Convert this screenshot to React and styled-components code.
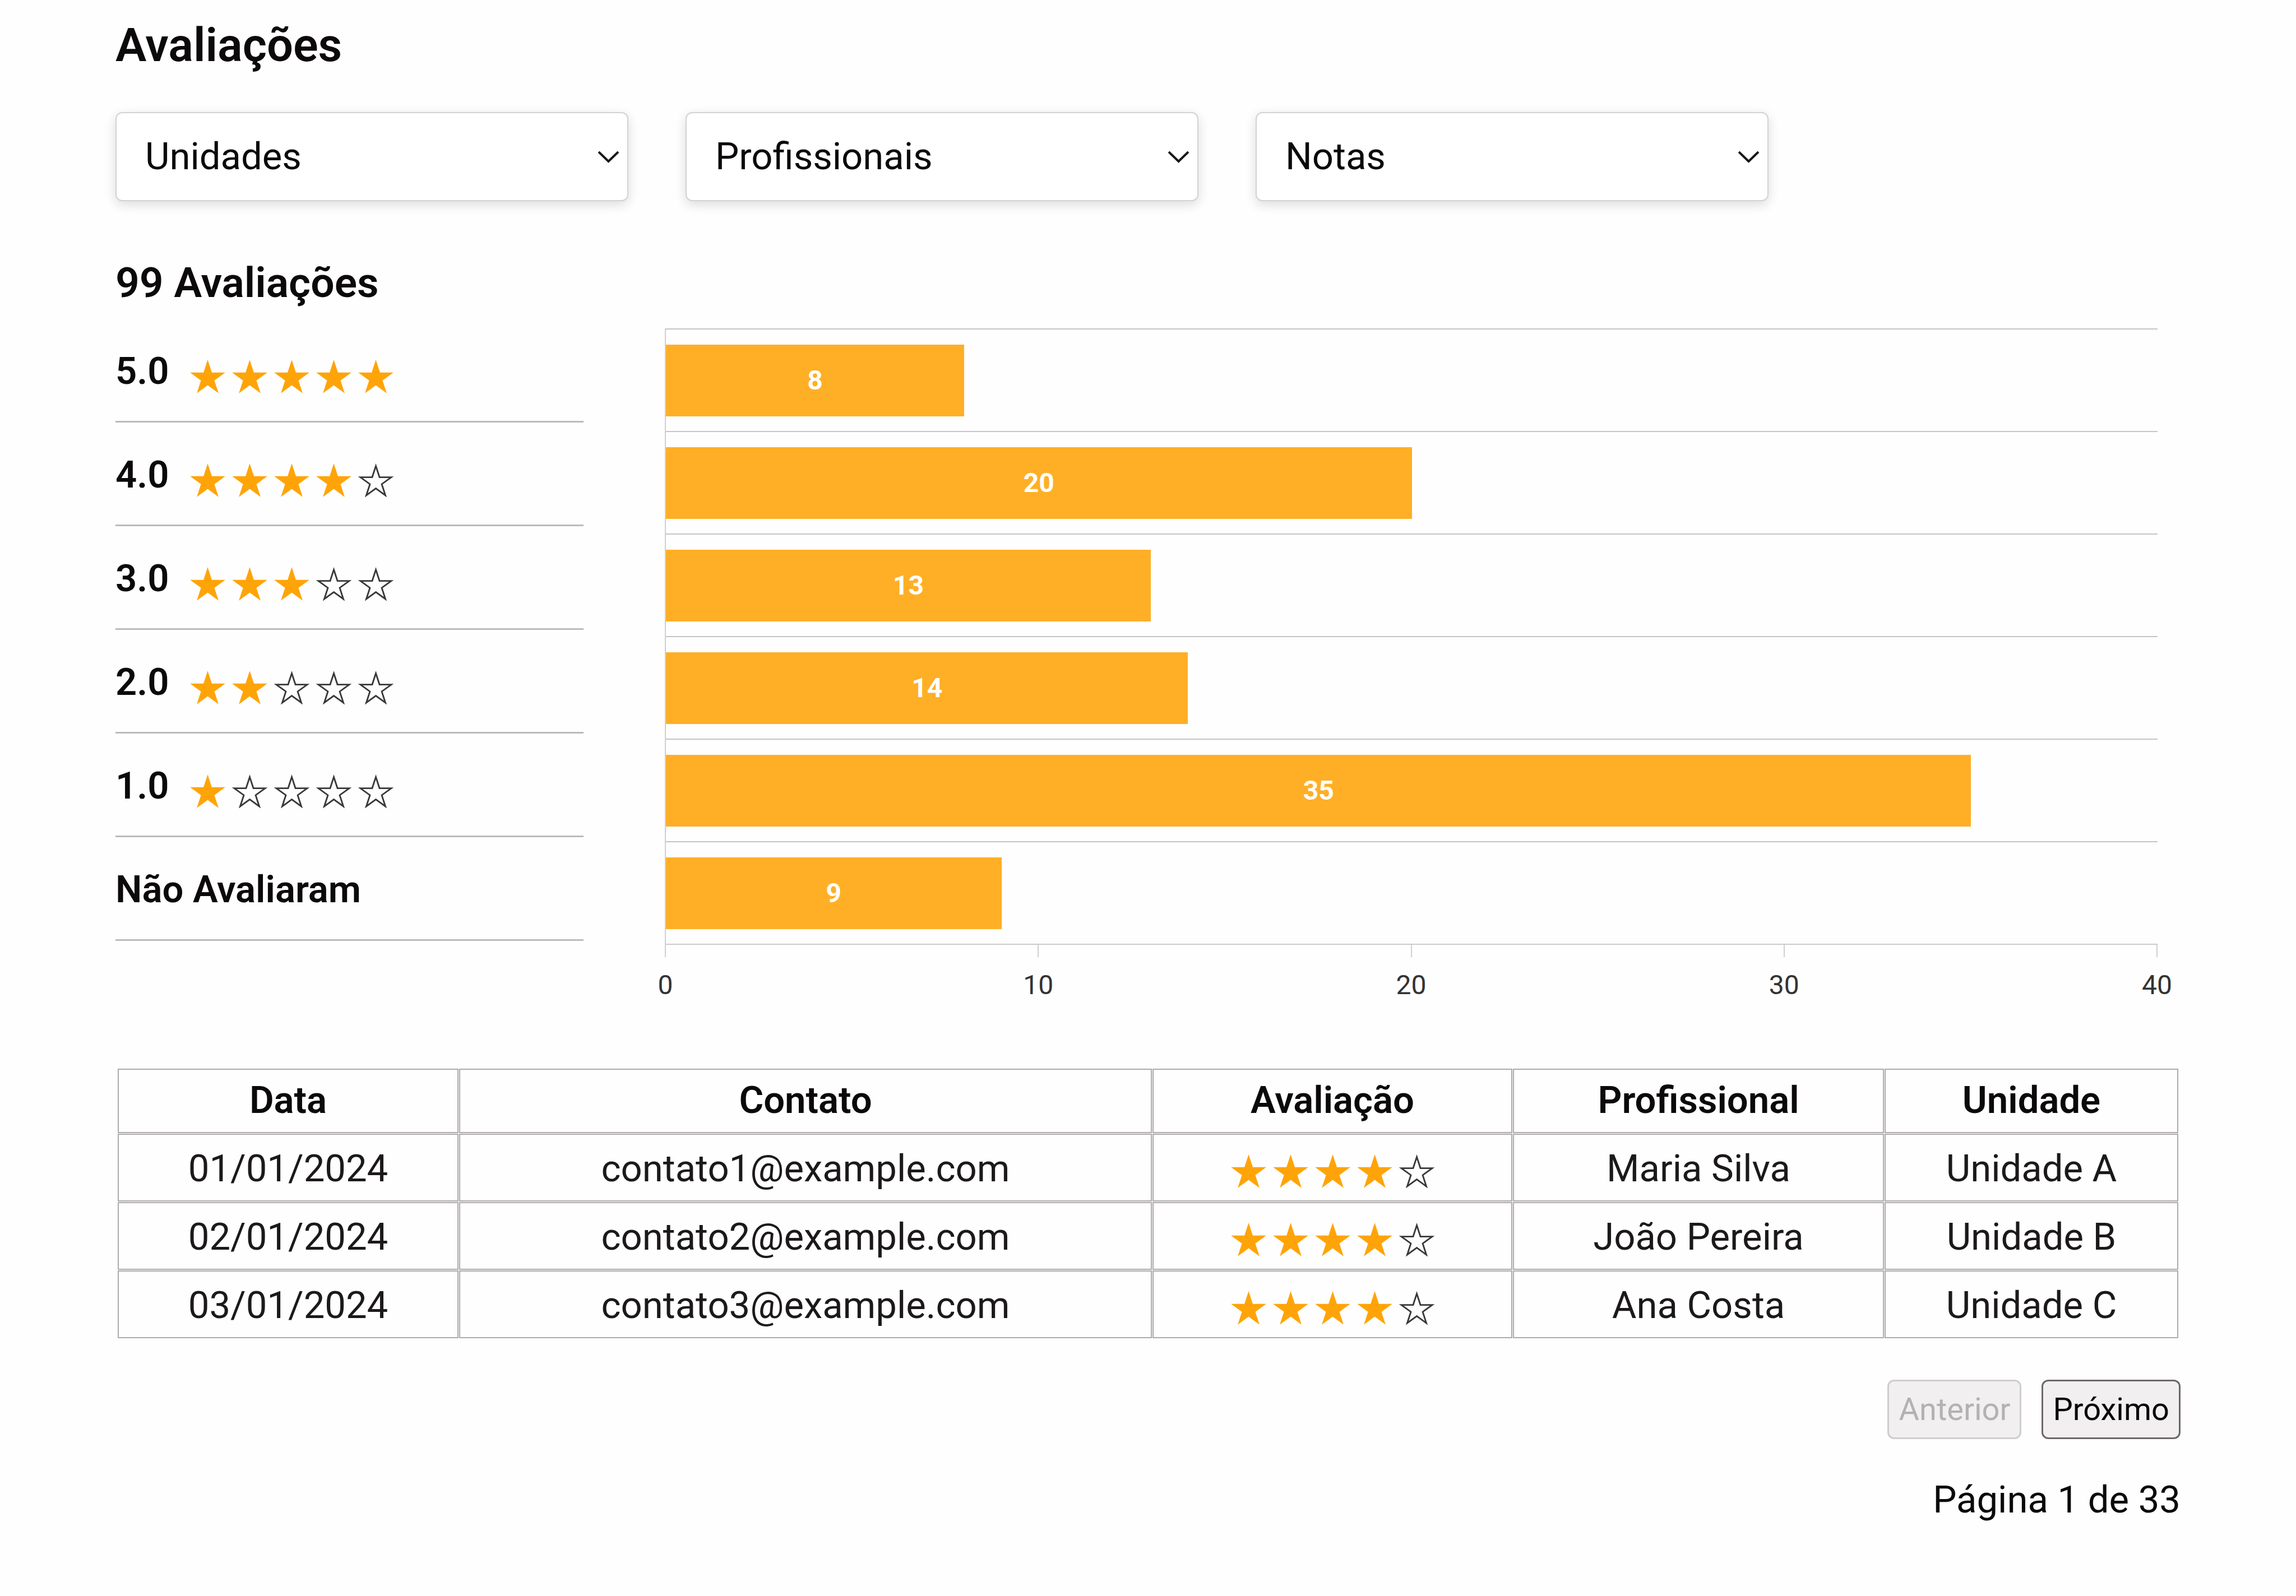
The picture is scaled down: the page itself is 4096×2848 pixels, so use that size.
import React, { useState } from "react";
import styled, { createGlobalStyle } from "styled-components";

const GlobalStyle = createGlobalStyle`
  *, *::before, *::after { box-sizing: border-box; }
  body {
    margin: 0;
    background: #fefefe;
    color: #0c090a;
    font-family: Roboto, "Liberation Sans", sans-serif;
    font-size: 67px;
    line-height: 79px;
  }
`;

const Page = styled.main`
  padding: 32px 206px 130px;
`;

const Title = styled.h1`
  margin: 0 0 70px;
  font-size: 83px;
  line-height: 98px;
  font-weight: 600;
`;

const Subtitle = styled.h2`
  margin: 0;
  font-size: 75px;
  line-height: 89px;
  font-weight: 600;
`;

const Filters = styled.div`
  display: flex;
  gap: 102px;
  margin-bottom: 101px;
`;

const SelectField = styled.label`
  display: grid;
  align-items: center;
  width: 915px;
`;

const SelectInput = styled.select`
  grid-area: 1 / 1;
  appearance: none;
  width: 100%;
  height: 159px;
  margin: 0;
  padding: 0 80px 0 51px;
  border: 2px solid #d3d2d4;
  border-radius: 12px;
  background: #ffffff;
  box-shadow: 0 6px 20px rgba(0, 0, 0, 0.14);
  color: inherit;
  font: inherit;
`;

const Chevron = styled.svg`
  grid-area: 1 / 1;
  justify-self: end;
  margin-right: 15px;
  width: 41px;
  height: 24px;
  fill: none;
  stroke: #1a1616;
  stroke-width: 4;
  pointer-events: none;
`;

const Summary = styled.section`
  display: flex;
  align-items: flex-start;
  gap: 145px;
  margin-bottom: 120px;
`;

const ScoreList = styled.ul`
  flex: 0 0 835px;
  margin: 20px 0 0;
  padding: 0;
  list-style: none;
`;

const ScoreRow = styled.li`
  display: flex;
  align-items: flex-end;
  gap: 31px;
  padding: 54px 0 49px;
  border-bottom: 3px solid #bdbabb;
  font-weight: 600;
`;

const StarStrip = styled.svg`
  width: 375px;
  height: 60px;
  vertical-align: -12px;
`;

const Chart = styled.div`
  flex: 1;
  margin-top: 37px;
  padding-right: 41px;
`;

const Plot = styled.div`
  border-left: 2px solid #cfcfcf;
  border-bottom: 2px solid #cbcbcb;
`;

const Band = styled.div`
  display: flex;
  align-items: center;
  height: 183px;
  border-top: 2px solid #c6c4c4;
`;

const Bar = styled.div`
  height: 128px;
  background: #ffaf26;
  color: #ffffff;
  font-size: 48px;
  line-height: 128px;
  font-weight: 700;
  text-align: center;
`;

const Axis = styled.div`
  display: flex;
  justify-content: space-between;
`;

const Tick = styled.div`
  display: flex;
  flex-direction: column;
  align-items: center;
  gap: 22px;
  width: 2px;
  color: #333333;
  font-size: 48px;
  line-height: 56px;

  &::before {
    content: "";
    width: 2px;
    height: 22px;
    background: #cfcfcf;
  }
`;

const TableFrame = styled.div`
  padding: 0 3px;
`;

const Table = styled.table`
  width: 100%;
  table-layout: fixed;
  border-collapse: separate;
  border-spacing: 1px;
  text-align: center;
`;

const Column = styled.col`
  width: ${(p) => p.$width}px;
`;

const HeadCell = styled.th`
  padding: 15px 0 17px;
  border: 2px solid #aeaaab;
  font-weight: 600;
`;

const Cell = styled.td`
  padding: 21px 0 17px;
  border: 2px solid #aeaaab;
  color: #1c191a;
`;

const Pager = styled.nav`
  display: flex;
  justify-content: flex-end;
  gap: 36px;
  margin: 73px 0 69px;
`;

const PageButton = styled.button`
  margin: 0;
  padding: 17px;
  border: 3px solid #6d696a;
  border-radius: 12px;
  background: #f1eff0;
  color: #0c090a;
  font: inherit;
  font-size: 56px;
  line-height: 66px;

  &:disabled {
    border-color: #cfcdcd;
    color: #b3b2b3;
  }
`;

const PageStatus = styled.p`
  margin: 0;
  text-align: right;
`;

const MAX_VALUE = 40;
const TOTAL_PAGES = 33;

const filters = [
  { name: "unidades", label: "Unidades" },
  { name: "profissionais", label: "Profissionais" },
  { name: "notas", label: "Notas" },
];

const scores = [
  { label: "5.0", stars: 5, count: 8 },
  { label: "4.0", stars: 4, count: 20 },
  { label: "3.0", stars: 3, count: 13 },
  { label: "2.0", stars: 2, count: 14 },
  { label: "1.0", stars: 1, count: 35 },
  { label: "Não Avaliaram", stars: null, count: 9 },
];

const ticks = [0, 10, 20, 30, 40];

const columns = [
  { title: "Data", width: 608 },
  { title: "Contato", width: 1236 },
  { title: "Avaliação", width: 642 },
  { title: "Profissional", width: 662 },
  { title: "Unidade", width: 524 },
];

const reviews = [
  { date: "01/01/2024", contact: "contato1@example.com", stars: 4, professional: "Maria Silva", unit: "Unidade A" },
  { date: "02/01/2024", contact: "contato2@example.com", stars: 4, professional: "João Pereira", unit: "Unidade B" },
  { date: "03/01/2024", contact: "contato3@example.com", stars: 4, professional: "Ana Costa", unit: "Unidade C" },
];

/* Five-pointed star; the inner radius is 0.382 of the outer one. */
function starPoints(cx, cy, radius) {
  return Array.from({ length: 10 }, (_, i) => {
    const r = i % 2 ? radius * 0.382 : radius;
    const a = (Math.PI / 5) * i - Math.PI / 2;
    return `${(cx + r * Math.cos(a)).toFixed(2)},${(cy + r * Math.sin(a)).toFixed(2)}`;
  }).join(" ");
}

function Stars({ value }) {
  return (
    <StarStrip viewBox="0 0 375 60" role="img" aria-label={`${value} de 5 estrelas`}>
      {[0, 1, 2, 3, 4].map((i) =>
        i < value ? (
          <polygon key={i} points={starPoints(37.5 + i * 75, 33, 33)} fill="#ffa408" />
        ) : (
          <polygon
            key={i}
            points={starPoints(37.5 + i * 75, 33.5, 29)}
            fill="none"
            stroke="#3a3738"
            strokeWidth="2.8"
          />
        )
      )}
    </StarStrip>
  );
}

function Filter({ name, label }) {
  return (
    <SelectField>
      <SelectInput name={name} aria-label={label} defaultValue="">
        <option value="">{label}</option>
      </SelectInput>
      <Chevron viewBox="0 0 41 24" aria-hidden="true">
        <path d="M3 3 L20.5 20 L38 3" />
      </Chevron>
    </SelectField>
  );
}

export default function App() {
  const [page, setPage] = useState(1);

  return (
    <>
      <GlobalStyle />
      <Page>
        <Title>Avaliações</Title>
        <Filters>
          {filters.map((f) => (
            <Filter key={f.name} {...f} />
          ))}
        </Filters>

        <Subtitle>99 Avaliações</Subtitle>
        <Summary>
          <ScoreList>
            {scores.map((s) => (
              <ScoreRow key={s.label}>
                <span>{s.label}</span>
                {s.stars !== null && <Stars value={s.stars} />}
              </ScoreRow>
            ))}
          </ScoreList>
          <Chart>
            <Plot>
              {scores.map((s) => (
                <Band key={s.label}>
                  <Bar style={{ width: `${(s.count / MAX_VALUE) * 100}%` }}>{s.count}</Bar>
                </Band>
              ))}
            </Plot>
            <Axis>
              {ticks.map((t) => (
                <Tick key={t}>{t}</Tick>
              ))}
            </Axis>
          </Chart>
        </Summary>

        <TableFrame>
          <Table>
            <colgroup>
              {columns.map((c) => (
                <Column key={c.title} $width={c.width} />
              ))}
            </colgroup>
            <thead>
              <tr>
                {columns.map((c) => (
                  <HeadCell key={c.title} scope="col">{c.title}</HeadCell>
                ))}
              </tr>
            </thead>
            <tbody>
              {reviews.map((r) => (
                <tr key={r.date}>
                  <Cell>{r.date}</Cell>
                  <Cell>{r.contact}</Cell>
                  <Cell><Stars value={r.stars} /></Cell>
                  <Cell>{r.professional}</Cell>
                  <Cell>{r.unit}</Cell>
                </tr>
              ))}
            </tbody>
          </Table>
        </TableFrame>

        <Pager aria-label="Paginação">
          <PageButton type="button" disabled={page === 1} onClick={() => setPage(page - 1)}>
            Anterior
          </PageButton>
          <PageButton type="button" disabled={page === TOTAL_PAGES} onClick={() => setPage(page + 1)}>
            Próximo
          </PageButton>
        </Pager>
        <PageStatus>Página {page} de {TOTAL_PAGES}</PageStatus>
      </Page>
    </>
  );
}
